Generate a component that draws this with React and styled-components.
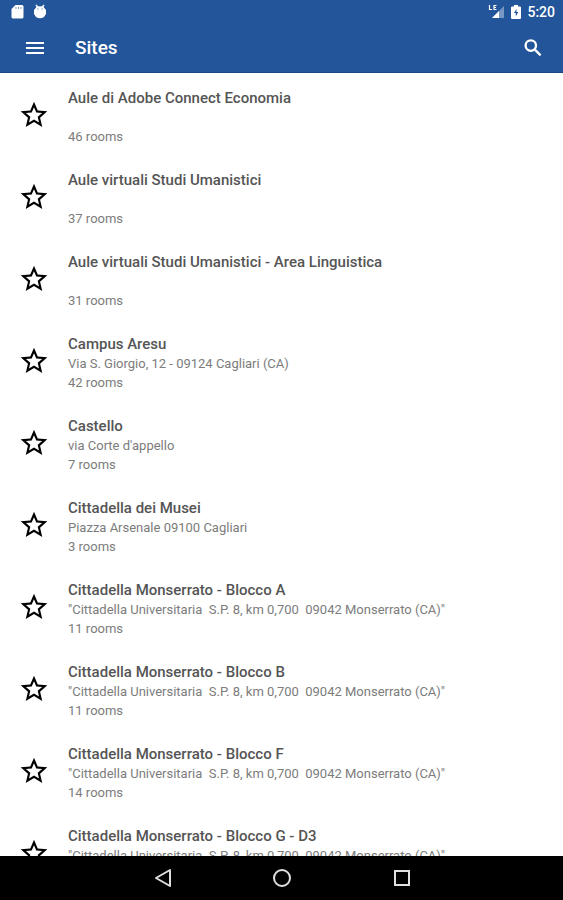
import React, { useState } from 'react';
import styled, { createGlobalStyle } from 'styled-components';

const GlobalStyle = createGlobalStyle`
  * {
    box-sizing: border-box;
  }

  body {
    margin: 0;
    background: #fff;
    font-family: Roboto, "Liberation Sans", sans-serif;
  }
`;

const Screen = styled.div`
  display: flex;
  flex-direction: column;
  height: 100vh;
  overflow: hidden;
`;

const Header = styled.header`
  flex: none;
  background: #225599;
  color: #fff;
  border-bottom: 1px solid #1b457e;
`;

const StatusBar = styled.div`
  display: flex;
  align-items: center;
  justify-content: space-between;
  height: 24px;
  padding: 0 8px 0 10px;
`;

const StatusGroup = styled.div`
  display: flex;
  align-items: center;
  gap: ${(props) => props.$gap};
`;

const Clock = styled.span`
  font-size: 14px;
  font-weight: 500;
  line-height: 24px;
`;

const Toolbar = styled.div`
  display: flex;
  align-items: center;
  height: 48px;
  padding: 0 18px 0 23px;
`;

const Title = styled.h1`
  flex: 1;
  margin: 0 0 0 28px;
  font-size: 19px;
  font-weight: 500;
  line-height: 24px;
`;

const IconButton = styled.button`
  display: flex;
  flex: none;
  padding: 0;
  border: none;
  background: none;
  color: ${(props) => props.$color || '#fff'};
  cursor: pointer;
`;

const StarButton = styled(IconButton)`
  padding-bottom: 4px;
`;

const List = styled.ul`
  flex: 1;
  min-height: 0;
  margin: 0;
  padding: 3px 0 0;
  overflow: hidden;
  list-style: none;
`;

const Row = styled.li`
  display: flex;
  align-items: center;
  gap: 18px;
  height: 82px;
  padding: 0 18px;
`;

const RowText = styled.div`
  flex: 1;
  min-width: 0;
`;

const SiteName = styled.h2`
  margin: 0;
  color: #555;
  font-size: 15px;
  font-weight: 500;
  line-height: 19px;
`;

const Detail = styled.p`
  min-height: 19px;
  margin: 0;
  color: #7c7c7c;
  font-size: 13px;
  line-height: 19px;
  white-space: pre-wrap;
`;

const NavBar = styled.nav`
  display: flex;
  flex: none;
  align-items: center;
  justify-content: center;
  gap: 96px;
  height: 44px;
  background: #000;
`;

const cittadella = '"Cittadella Universitaria  S.P. 8, km 0,700  09042 Monserrato (CA)"';

const sites = [
  { name: 'Aule di Adobe Connect Economia', address: '', rooms: 46 },
  { name: 'Aule virtuali Studi Umanistici', address: '', rooms: 37 },
  { name: 'Aule virtuali Studi Umanistici - Area Linguistica', address: '', rooms: 31 },
  { name: 'Campus Aresu', address: 'Via S. Giorgio, 12 - 09124 Cagliari (CA)', rooms: 42 },
  { name: 'Castello', address: "via Corte d'appello", rooms: 7 },
  { name: 'Cittadella dei Musei', address: 'Piazza Arsenale 09100 Cagliari', rooms: 3 },
  { name: 'Cittadella Monserrato - Blocco A', address: cittadella, rooms: 11 },
  { name: 'Cittadella Monserrato - Blocco B', address: cittadella, rooms: 11 },
  { name: 'Cittadella Monserrato - Blocco F', address: cittadella, rooms: 14 },
  { name: 'Cittadella Monserrato - Blocco G - D3', address: cittadella, rooms: 14 },
];

const STAR = 'M12 17.27 18.18 21l-1.64-7.03L22 9.24l-7.19-.61L12 2 9.19 8.63 2 9.24l5.46 4.73L5.82 21z';
const STAR_BORDER = 'M22 9.24l-7.19-.62L12 2 9.19 8.63 2 9.24l5.46 4.73L5.82 21 12 17.27 18.18 21l-1.63-7.03L22 9.24zM12 15.4l-3.76 2.27 1-4.28-3.32-2.88 4.38-.38L12 6.1l1.71 4.04 4.38.38-3.32 2.88 1 4.28L12 15.4z';

const StarIcon = ({ filled }) => (
  <svg width="32" height="32" viewBox="0 0 24 24" fill="currentColor">
    <path d={filled ? STAR : STAR_BORDER} />
  </svg>
);

const SdCardIcon = () => (
  <svg width="14" height="16" viewBox="0 0 14 16">
    <path d="M5.5 1H12a1.5 1.5 0 0 1 1.5 1.5V13a1.5 1.5 0 0 1-1.5 1.5H3A1.5 1.5 0 0 1 1.5 13V5z" fill="#fff" />
    <path d="M6 3v2M8.5 3v2M11 3v2" stroke="#7f9cc6" />
  </svg>
);

const DebugIcon = () => (
  <svg width="14" height="16" viewBox="0 0 14 16">
    <path d="M3 1l2 2.5M11 1L9 3.5" stroke="#fff" strokeWidth="1.5" />
    <path d="M3.5 3Q7 1.500 10.5 3L13 6v4l-2 3Q7 15.500 3 13L1 10V6z" fill="#fff" />
    <path d="M4 5h1.5M8.5 5H10" stroke="#7f9cc6" />
  </svg>
);

const SignalIcon = () => (
  <svg width="17" height="16" viewBox="0 0 17 16">
    <path d="M16 2v12H4z" fill="#7897c3" />
    <path d="M11 7v7H4z" fill="#fff" />
    <path d="M1.5 1v4.5H4M8.5 1.5H6v4h2.5M6 3.5h2" fill="none" stroke="#fff" strokeWidth="1.2" />
  </svg>
);

const BatteryIcon = () => (
  <svg width="10" height="16" viewBox="0 0 10 16">
    <path d="M3 1h4v1.5h2a1 1 0 0 1 1 1V14a1 1 0 0 1-1 1H1a1 1 0 0 1-1-1V3.5a1 1 0 0 1 1-1h2z" fill="#fff" />
    <path d="M5.5 5L3 9h1.8v3.5L7.3 8H5.5z" fill="#225599" />
  </svg>
);

const SiteRow = ({ site }) => {
  const [starred, setStarred] = useState(false);

  return (
    <Row>
      <StarButton
        type="button"
        $color="#000"
        aria-label={`Favourite ${site.name}`}
        aria-pressed={starred}
        onClick={() => setStarred(!starred)}
      >
        <StarIcon filled={starred} />
      </StarButton>
      <RowText>
        <SiteName>{site.name}</SiteName>
        <Detail>{site.address}</Detail>
        <Detail>{site.rooms} rooms</Detail>
      </RowText>
    </Row>
  );
};

const App = () => (
  <Screen>
    <GlobalStyle />
    <Header>
      <StatusBar>
        <StatusGroup $gap="9px">
          <SdCardIcon />
          <DebugIcon />
        </StatusGroup>
        <StatusGroup $gap="6px">
          <SignalIcon />
          <BatteryIcon />
          <Clock>5:20</Clock>
        </StatusGroup>
      </StatusBar>
      <Toolbar>
        <IconButton type="button" aria-label="Open menu">
          <svg width="24" height="24" viewBox="0 0 24 24" fill="currentColor">
            <path d="M3 18h18v-2H3v2zm0-5h18v-2H3v2zm0-7v2h18V6H3z" />
          </svg>
        </IconButton>
        <Title>Sites</Title>
        <IconButton type="button" aria-label="Search">
          <svg width="24" height="24" viewBox="0 0 24 24" fill="none" stroke="currentColor" strokeWidth="2.3">
            <circle cx="9.8" cy="9.6" r="5.2" />
            <path d="M13.6 13.4l6 6" />
          </svg>
        </IconButton>
      </Toolbar>
    </Header>
    <List>
      {sites.map((site) => (
        <SiteRow key={site.name} site={site} />
      ))}
    </List>
    <NavBar>
      <IconButton type="button" aria-label="Back" $color="#e0e0e0">
        <svg width="24" height="24" viewBox="0 0 24 24" fill="none" stroke="currentColor" strokeWidth="2" strokeLinejoin="round">
          <path d="M20 4v16L6 12z" />
        </svg>
      </IconButton>
      <IconButton type="button" aria-label="Home" $color="#e0e0e0">
        <svg width="24" height="24" viewBox="0 0 24 24" fill="none" stroke="currentColor" strokeWidth="2">
          <circle cx="12" cy="12" r="8" />
        </svg>
      </IconButton>
      <IconButton type="button" aria-label="Recent apps" $color="#e0e0e0">
        <svg width="24" height="24" viewBox="0 0 24 24" fill="none" stroke="currentColor" strokeWidth="2">
          <path d="M5 5h14v14H5z" />
        </svg>
      </IconButton>
    </NavBar>
  </Screen>
);

export default App;
